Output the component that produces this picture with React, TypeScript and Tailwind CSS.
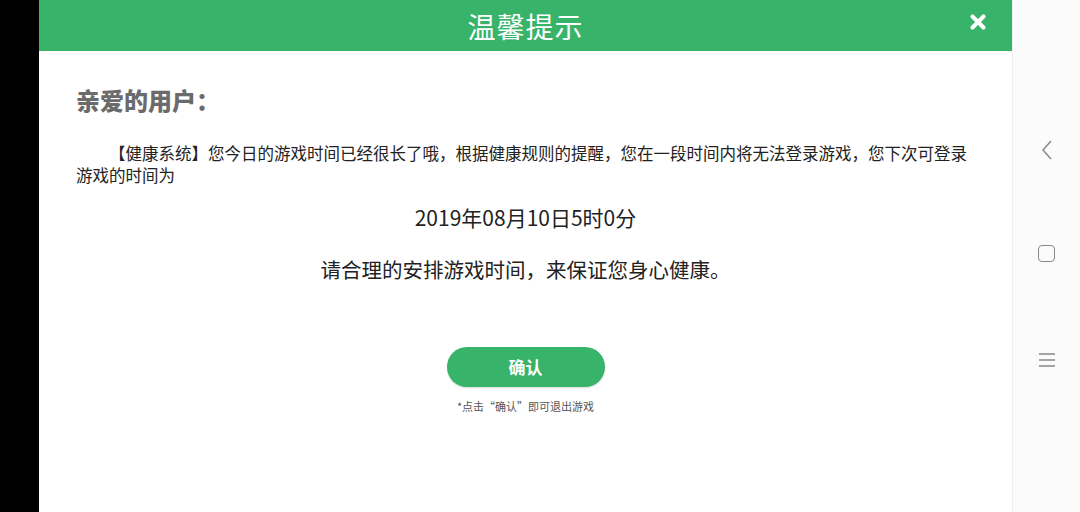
import { X } from "lucide-react";

const cjk = { fontFamily: '"Noto Sans CJK SC", "Noto Sans", sans-serif' };

export default function App() {
  return (
    <div className="flex h-[512px] w-[1080px] overflow-hidden bg-white" style={cjk}>
      {/* left black edge */}
      <div className="w-[39px] shrink-0 bg-black" />

      {/* dialog */}
      <div className="flex w-[973px] shrink-0 flex-col bg-white">
        <div className="relative flex h-[51px] items-center justify-center bg-[#37b36a]">
          <span className="text-[28px] leading-none tracking-[1px] text-white">温馨提示</span>
          <X className="absolute right-[23px] top-[11px] h-[22px] w-[22px] text-white" strokeWidth={4.5} />
        </div>

        <div className="flex flex-col px-[37px] pt-[32px]">
          <div className="text-[24px] font-black leading-[34px] text-[#6b6b6b]">亲爱的用户：</div>
          <p className="mt-[25px] indent-[33px] text-[16.5px] leading-[22px] text-[#222]">
            【健康系统】您今日的游戏时间已经很长了哦，根据健康规则的提醒，您在一段时间内将无法登录游戏，您下次可登录游戏的时间为
          </p>
          <div className="mt-[17px] text-center text-[21px] leading-[28px] text-[#222]">2019年08月10日5时0分</div>
          <div className="mt-[24px] text-center text-[20.5px] leading-[28px] text-[#222]">
            请合理的安排游戏时间，来保证您身心健康。
          </div>

          <div className="mt-[64px] flex justify-center">
            <button className="flex h-[40px] w-[158px] items-center justify-center rounded-full bg-[#37b36a] text-[17px] font-bold text-white shadow-[0_1px_2px_rgba(0,0,0,0.15)]">
              确认
            </button>
          </div>
          <div className="mt-[11px] text-center text-[11px] leading-[16px] text-[#555]">*点击“确认”即可退出游戏</div>
        </div>
      </div>

      {/* right nav bar */}
      <div className="flex flex-1 flex-col items-center border-l border-[#efefef] bg-[#fbfbfb] pt-[139px]">
        <svg width="14" height="22" viewBox="0 0 14 22" className="text-[#888]">
          <path d="M11 2 L3 11 L11 20" fill="none" stroke="currentColor" strokeWidth="1.5" />
        </svg>
        <div className="mt-[84px] h-[17px] w-[17px] rounded-[4px] border-[1.5px] border-[#888]" />
        <svg width="18" height="16" viewBox="0 0 18 16" className="mt-[90px] text-[#888]">
          <path d="M1 2 H17 M1 8 H17 M1 14 H17" stroke="currentColor" strokeWidth="1.3" />
        </svg>
      </div>
    </div>
  );
}
